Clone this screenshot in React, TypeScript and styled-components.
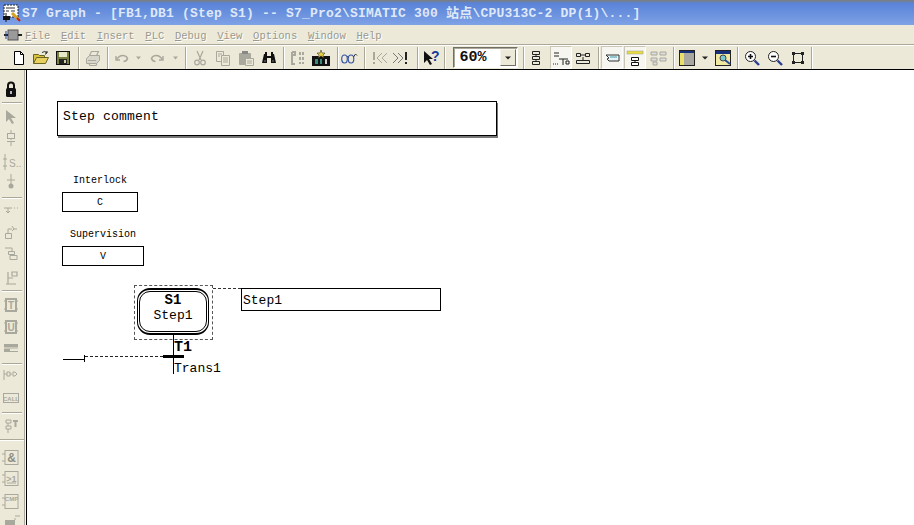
import React from "react";
import styled, { createGlobalStyle } from "styled-components";

const GlobalStyle = createGlobalStyle`
  html, body { margin: 0; padding: 0; background: #fff; }
  #root { width: 914px; height: 525px; overflow: hidden; }
`;

const GRAY = "#a9a89c";
const MONO = `"Liberation Mono", "Noto Sans CJK SC", monospace`;

const Window = styled.div`
  width: 914px;
  height: 525px;
  display: flex;
  flex-direction: column;
  overflow: hidden;
  background: #ece9d8;
  font-family: ${MONO};
`;
const TitleBar = styled.div`
  height: 25px;
  flex: none;
  display: flex;
  align-items: center;
  padding-left: 3px;
  box-sizing: border-box;
  background: linear-gradient(#77808a 0, #77808a 1px, #5a83d8 3px, #6b92de 14px, #7ea2e6 25px);
`;
const TitleText = styled.span`
  font-size: 13px;
  font-weight: 700;
  letter-spacing: 0.2px;
  color: #dfe8f8;
  white-space: pre;
  margin-top: -3px;
`;
const MenuBar = styled.div`
  height: 20px;
  flex: none;
  display: flex;
  align-items: center;
  padding-left: 4px;
  background: #ece9d8;
  box-sizing: border-box;
  border-bottom: 1px solid #aca899;
`;
const MenuList = styled.div`
  display: flex;
  gap: 10.7px;
  margin: 2px 0 0 3px;
`;
const MenuItem = styled.span`
  font-size: 10.5px;
  color: #9a998e;
  text-shadow: 1px 1px 0 #fff;
  u { text-underline-offset: 1px; }
`;
const ToolBar = styled.div`
  height: 25px;
  flex: none;
  display: flex;
  align-items: center;
  border-top: 1px solid #fff;
  border-bottom: 1px solid #000;
  box-sizing: border-box;
`;
const Slot = styled.div<{ $gap: number; $size: number }>`
  flex: none;
  width: ${(p) => p.$size}px;
  height: 16px;
  margin-left: ${(p) => p.$gap}px;
  display: flex;
  align-items: center;
  justify-content: center;
`;
const Face = styled.div<{ $active?: boolean }>`
  flex: none;
  display: flex;
  align-items: center;
  justify-content: center;
  width: 22px;
  height: 23px;
  box-sizing: border-box;
  ${(p) =>
    p.$active &&
    `background: #f6f5ef; border: 1px solid; border-color: #c9c6b6 #fff #fff #c9c6b6;`}
`;
const VSep = styled.div<{ $gap: number }>`
  flex: none;
  width: 1px;
  height: 22px;
  margin-left: ${(p) => p.$gap}px;
  margin-right: 1px;
  background: #aca899;
  box-shadow: 1px 0 0 #fff;
`;
const Combo = styled.div<{ $gap: number }>`
  flex: none;
  width: 65px;
  height: 21px;
  margin-left: ${(p) => p.$gap}px;
  display: flex;
  align-items: center;
  justify-content: space-between;
  box-sizing: border-box;
  background: #fff;
  border: 1px solid;
  border-color: #716f64 #fff #fff #716f64;
  box-shadow: inset 1px 1px 0 #aca899;
  font-size: 15px;
  font-weight: 700;
  color: #111;
  padding: 0 1px 0 6px;
`;
const ComboButton = styled.div`
  width: 16px;
  height: 17px;
  display: flex;
  align-items: center;
  justify-content: center;
  background: #ece9d8;
  border: 1px solid;
  border-color: #f6f5ef #716f64 #716f64 #f6f5ef;
  box-sizing: border-box;
`;
const Body = styled.div`
  flex: 1;
  display: flex;
  min-height: 0;
`;
const Rail = styled.div`
  width: 27px;
  flex: none;
  display: flex;
  flex-direction: column;
  align-items: flex-start;
  box-sizing: border-box;
  border-right: 1px solid #000;
  background: linear-gradient(to left, #f6f5ef 0, #f6f5ef 1px, #aca899 1px, #aca899 2px, #ece9d8 2px);
`;
const RailSlot = styled.div<{ $gap: number }>`
  flex: none;
  width: 22px;
  height: 16px;
  margin-top: ${(p) => p.$gap}px;
  display: flex;
  justify-content: center;
  align-items: center;
`;
const HSep = styled.div<{ $gap: number; $full?: boolean }>`
  flex: none;
  width: ${(p) => (p.$full ? 24 : 20)}px;
  height: 1px;
  margin: ${(p) => p.$gap}px 0 1px ${(p) => (p.$full ? 0 : 2)}px;
  background: #aca899;
  box-shadow: 0 1px 0 #fff;
`;
const Canvas = styled.div`
  flex: 1;
  position: relative;
  background: #fff;
  color: #000;
`;

// diagram nodes sit on a free canvas, coordinates are relative to it (27,70)
const CommentBox = styled.div`
  position: absolute;
  left: 30px;
  top: 31px;
  width: 440px;
  height: 35px;
  box-sizing: border-box;
  border: 1px solid #000;
  box-shadow: 1px 2px 0 #777;
  padding: 7px 0 0 5px;
  font-size: 13px;
  letter-spacing: 0.2px;
`;
const Caption = styled.div<{ $x: number; $y: number; $w: number }>`
  position: absolute;
  left: ${(p) => p.$x}px;
  top: ${(p) => p.$y}px;
  width: ${(p) => p.$w}px;
  text-align: center;
  font-size: 10px;
  line-height: 12px;
`;
const ActionBox = styled.div<{ $x: number; $y: number; $w: number }>`
  position: absolute;
  left: ${(p) => p.$x}px;
  top: ${(p) => p.$y}px;
  width: ${(p) => p.$w}px;
  height: 20px;
  box-sizing: border-box;
  border: 1px solid #000;
  display: flex;
  align-items: center;
  justify-content: center;
  font-size: 10px;
`;
const StepFrame = styled.div`
  position: absolute;
  left: 107px;
  top: 215px;
  width: 79px;
  height: 55px;
  box-sizing: border-box;
  border: 1px dashed #555;
`;
const StepBody = styled.div`
  position: absolute;
  left: 110px;
  top: 218px;
  width: 72px;
  height: 47px;
  box-sizing: border-box;
  border: 1px solid #000;
  border-top-width: 2px;
  border-bottom-width: 2px;
  border-radius: 13px;
  display: flex;
  align-items: center;
  justify-content: center;
  padding-bottom: 7px;
  &::after {
    content: "";
    position: absolute;
    inset: 1px;
    border: 1px solid #000;
    border-radius: 11px;
  }
`;
const StepText = styled.div`
  display: flex;
  flex-direction: column;
  align-items: center;
  font-size: 13px;
  line-height: 15px;
  strong { font-size: 14px; }
`;
const StepName = styled.div`
  position: absolute;
  left: 214px;
  top: 218px;
  width: 200px;
  height: 23px;
  box-sizing: border-box;
  border: 1px solid #000;
  padding-left: 1px;
  line-height: 23px;
  font-size: 13px;
`;
const Wires = styled.svg`
  position: absolute;
  left: 0;
  top: 0;
  pointer-events: none;
`;
const TransTitle = styled.strong`
  position: absolute;
  left: 147px;
  top: 270px;
  font-size: 15px;
  line-height: 16px;
`;
const TransName = styled.span`
  position: absolute;
  left: 147px;
  top: 291px;
  font-size: 13px;
  line-height: 15px;
`;

const Ico = ({ children, w = 16, h = 16 }: { children: React.ReactNode; w?: number; h?: number }) => (
  <svg width={w} height={h} viewBox={`0 0 ${w} ${h}`} style={{ display: "block", flex: "none", overflow: "visible" }}>
    {children}
  </svg>
);

const gl = { fontFamily: '"Liberation Sans", sans-serif', fontWeight: 700 } as const;

const icons: Record<string, React.ReactNode> = {
  app: (
    <Ico w={19} h={18}>
      <rect x="1" y="1" width="14" height="12" fill="#fff" stroke="#222" strokeDasharray="2 1" />
      <path d="M3 4h9M3 7h3M8 7h4" stroke="#333" />
      <path d="M0 12h7v4H0z" fill="#111" />
      <path d="M3 9v9" stroke="#111" />
      <path d="M9 9l7 7" stroke="#d8a020" strokeWidth="3" />
      <path d="M14 14l3 3" stroke="#c02020" strokeWidth="2" />
    </Ico>
  ),
  doc: (
    <Ico w={18} h={12}>
      <rect x="4" y="1" width="10" height="10" fill="#9a9a9a" stroke="#555" />
      <path d="M0 6h4M14 6h4" stroke="#222" strokeWidth="2" />
      <path d="M2 2v8" stroke="#2040a0" />
    </Ico>
  ),
  newFile: <Ico><path d="M3.5 1.5h6l3 3v10h-9z" fill="#fff" stroke="#000" /><path d="M9.5 1.5v3h3" fill="none" stroke="#000" /></Ico>,
  open: (
    <Ico>
      <path d="M0.5 13.5v-9h5l1 1h5v2h-7l-3 6z" fill="#d8c040" stroke="#6a6420" />
      <path d="M0.5 13.5l3-6h12l-3 6z" fill="#e8d060" stroke="#6a6420" />
      <path d="M9 2.5q3-2 5 0l-1.5 2M14 1v2h-2" fill="none" stroke="#333" />
    </Ico>
  ),
  save: (
    <Ico>
      <rect x="1.5" y="1.5" width="13" height="13" fill="#7a8040" stroke="#111" />
      <rect x="4" y="2" width="8" height="5" fill="#e8e8c8" />
      <rect x="4" y="9" width="8" height="5" fill="#222" />
      <rect x="9" y="10" width="2" height="3" fill="#cfcfa8" />
    </Ico>
  ),
  print: (
    <Ico>
      <path d="M1.5 8.5l3-3h10v5l-3 3h-10z" fill="#d8d6ca" stroke={GRAY} />
      <path d="M4.5 5.5l2-4h7l-2 4M4 13.5l1 2h6l1-2M3 10.5h8" fill="none" stroke={GRAY} strokeWidth="1.2" />
    </Ico>
  ),
  undo: <Ico><path d="M3 6v4h4" fill="none" stroke={GRAY} strokeWidth="1.4" /><path d="M3.5 9.5q3-4 6-4q4 0 5 3q-1 3-4 3" fill="none" stroke={GRAY} strokeWidth="1.6" /></Ico>,
  redo: <Ico><path d="M13 6v4h-4" fill="none" stroke={GRAY} strokeWidth="1.4" /><path d="M12.5 9.5q-3-4-6-4q-4 0-5 3q1 3 4 3" fill="none" stroke={GRAY} strokeWidth="1.6" /></Ico>,
  drop: <Ico w={6} h={4}><path d="M0 0.5h5l-2.5 3z" fill={GRAY} /></Ico>,
  dropDark: <Ico w={6} h={4}><path d="M0 0.5h6l-3 3z" fill="#222" /></Ico>,
  cut: (
    <Ico>
      <path d="M5 1l4 9M11 1l-4 9" stroke={GRAY} strokeWidth="1.2" />
      <circle cx="5" cy="12.5" r="2.3" fill="none" stroke={GRAY} strokeWidth="1.2" />
      <circle cx="11" cy="12.5" r="2.3" fill="none" stroke={GRAY} strokeWidth="1.2" />
    </Ico>
  ),
  copy: (
    <Ico>
      <path d="M1.5 1.5h7v10h-7z" fill="#ece9d8" stroke={GRAY} />
      <path d="M6.5 5.5h8v10h-8z" fill="#ece9d8" stroke={GRAY} />
      <path d="M3 4h4M3 6h2M8 8h5M8 10h5M8 12h5" stroke={GRAY} />
    </Ico>
  ),
  paste: (
    <Ico>
      <rect x="1" y="3" width="12" height="12" rx="1" fill={GRAY} />
      <rect x="4" y="1" width="6" height="3" fill="#888" />
      <path d="M7.5 8.5h8v7h-8z" fill="#ece9d8" stroke={GRAY} />
      <path d="M9 11h5M9 13h5" stroke={GRAY} />
    </Ico>
  ),
  binoc: (
    <Ico>
      <path d="M1 13l2-9h3v2h4V4h3l2 9h-5V8H6v5z" fill="#111" />
      <path d="M4 2h2v3H4zM10 2h2v3h-2z" fill="#111" />
      <path d="M3 11h2M11 11h2" stroke="#777" />
    </Ico>
  ),
  compile: (
    <Ico>
      <path d="M2 2h3v3H2M2 2v12h3" fill="none" stroke={GRAY} strokeWidth="2" />
      <path d="M9 2h2v3H9zM12 2h2v3h-2zM9 7h2v3H9zM12 7h2v3h-2zM9 12h2v2H9zM12 12h2v2h-2z" fill={GRAY} />
    </Ico>
  ),
  download: (
    <Ico w={18} h={16}>
      <path d="M0 6h18v10H0z" fill="#111" />
      <path d="M3 9h3v5H3zM8 9h2v5H8z" fill="#3a8a7a" />
      <path d="M13 9h2v5h-2z" fill="#ccc" />
      <path d="M9 0l1 3h3l-2 2 1 3-3-2-3 2 1-3-2-2h3z" fill="#e8d040" stroke="#222" strokeWidth="0.5" />
    </Ico>
  ),
  glasses: (
    <Ico>
      <ellipse cx="3.5" cy="9" rx="2.8" ry="4" fill="none" stroke="#3050a8" strokeWidth="1.1" />
      <ellipse cx="10" cy="9" rx="2.8" ry="4" fill="none" stroke="#3050a8" strokeWidth="1.1" />
      <path d="M6 7q.8-1 1.5 0M12.5 7l2-3 1.5 1.5" fill="none" stroke="#333" />
    </Ico>
  ),
  prev: (
    <Ico>
      <path d="M2 2v8M2 12v2" stroke={GRAY} strokeWidth="2" />
      <path d="M10 3l-5 5 5 5M15 3l-5 5 5 5" fill="none" stroke={GRAY} />
    </Ico>
  ),
  next: (
    <Ico>
      <path d="M1 3l5 5-5 5M6 3l5 5-5 5" fill="none" stroke="#777" />
      <path d="M14 2v8M14 12v2" stroke="#222" strokeWidth="2" />
    </Ico>
  ),
  help: (
    <Ico w={17} h={16}>
      <path d="M1 1v12l3-3 3 5 2-1-3-5h4z" fill="#111" />
      <text x="8" y="11" fontSize="14" fill="#1a3a9a" style={gl}>?</text>
    </Ico>
  ),
  tree: (
    <Ico>
      <path d="M4.5 1.5h7v3h-7zM4.5 6.5h7v3h-7zM4.5 11.5h7v3h-7zM8 4.5v2M8 9.5v2" fill="none" stroke="#222" />
    </Ico>
  ),
  trans: (
    <Ico w={18}>
      <path d="M2 3h5M2 6h5M7 9h9M11 9v6M14 11h3v3h-3z" fill="none" stroke="#222" />
      <path d="M1 14h6" stroke="#222" strokeDasharray="1 1" />
    </Ico>
  ),
  seq: (
    <Ico w={14} h={12}>
      <path d="M0.5 1.5h4v3h-4zM9.5 1.5h4v3h-4zM0.5 8.5h13v3h-13zM4 3h6M7 5v3" fill="none" stroke="#222" />
    </Ico>
  ),
  comment: (
    <Ico>
      <path d="M2 5l3 3-2 1 2 2h10V5z" fill="#e8f4f8" stroke="#333" />
      <path d="M6 7h7" stroke="#3a9aa8" />
    </Ico>
  ),
  stepView: (
    <Ico>
      <rect x="0" y="1" width="16" height="3" fill="#e8dc40" stroke="#999" strokeWidth="0.5" />
      <path d="M4.5 7.5h7v3h-7zM4.5 12.5h7v3h-7zM8 10v3" fill="#fff" stroke="#111" />
    </Ico>
  ),
  stepMulti: (
    <Ico w={17}>
      <path d="M1 2h6v3H1zM10 2h6v3h-6zM1 8h6v3H1zM10 8h6v3h-6zM3 12h4v3H3z" fill="#ddd" stroke={GRAY} />
    </Ico>
  ),
  panel: (
    <Ico>
      <rect x="0.5" y="0.5" width="15" height="15" fill="#a8a8a0" stroke="#222" />
      <rect x="1" y="1" width="14" height="2" fill="#16307e" />
      <rect x="1" y="3" width="4" height="12" fill="#e8e068" />
    </Ico>
  ),
  preview: (
    <Ico>
      <rect x="0.5" y="0.5" width="15" height="15" fill="#f0e8a0" stroke="#222" />
      <rect x="1" y="1" width="14" height="3" fill="#16307e" />
      <circle cx="8" cy="8" r="3" fill="#7ac8d0" stroke="#444" />
      <path d="M10 10l5 4" stroke="#2a4aa0" strokeWidth="2" />
    </Ico>
  ),
  zoomIn: (
    <Ico>
      <circle cx="6.5" cy="6.5" r="5" fill="#fff" stroke="#222" />
      <path d="M4 6.5h5M6.5 4v5" stroke="#111" strokeWidth="1.6" />
      <path d="M10.5 10.5l4.5 4.5" stroke="#2a3f90" strokeWidth="2.4" />
    </Ico>
  ),
  zoomOut: (
    <Ico>
      <circle cx="6.5" cy="6.5" r="5" fill="#fff" stroke="#222" />
      <path d="M4 6.5h5" stroke="#111" strokeWidth="1.6" />
      <path d="M10.5 10.5l4.5 4.5" stroke="#2a3f90" strokeWidth="2.4" />
    </Ico>
  ),
  zoomFit: (
    <Ico>
      <path d="M3.5 3.5h9v9h-9z" fill="none" stroke="#222" />
      <path d="M2 2h3v3H2zM11 2h3v3h-3zM2 11h3v3H2zM11 11h3v3h-3z" fill="#222" />
    </Ico>
  ),
  lock: (
    <Ico w={12} h={17}>
      <path d="M3 8V4.5a3 3 0 0 1 6 0V8" fill="none" stroke="#111" strokeWidth="2" />
      <rect x="1" y="7" width="10" height="9" rx="1.5" fill="#111" />
      <rect x="5" y="10" width="2" height="3" fill="#bbb" />
    </Ico>
  ),
  pointer: <Ico><path d="M3 1v12l3-3 3 5 2-1-3-5h5z" fill={GRAY} /></Ico>,
  step: <Ico><path d="M8 0v3M8 8v2M4 11.5h8M8 12v4" stroke={GRAY} /><rect x="4.5" y="3.5" width="7" height="5" fill="none" stroke={GRAY} /></Ico>,
  ts: (
    <Ico w={18}>
      <path d="M3 0v16M1 5h4M1 12h4" stroke={GRAY} />
      <text x="7" y="13" fontSize="10" fill={GRAY} style={{ fontFamily: '"Liberation Sans", sans-serif' }}>S..</text>
    </Ico>
  ),
  jump: <Ico><path d="M8 0v12M4 6h8" stroke={GRAY} /><circle cx="8" cy="12" r="2.5" fill={GRAY} /></Ico>,
  branch1: <Ico><path d="M1 5h8M5 5v5M3 8l2 2 2-2M11 5h1M14 5h1" fill="none" stroke={GRAY} /></Ico>,
  branch2: <Ico><path d="M2.5 8.5h6v5h-6zM5 8V4h4M11 4h3M9 1l2 3-2 2" fill="none" stroke={GRAY} /></Ico>,
  branch3: <Ico><path d="M2 1h7v3M5.5 4.5h6v3h-6zM7 8.5h7v4H7z" fill="none" stroke={GRAY} /></Ico>,
  branch4: <Ico><path d="M3 15h10M5 3v12M5 9h5M9 3h5v4H9z" fill="none" stroke={GRAY} strokeWidth="1.2" /></Ico>,
  blockT: (
    <Ico>
      <rect x="3" y="2" width="10" height="12" fill="none" stroke={GRAY} strokeWidth="2" />
      <path d="M1 4h2M1 12h2M13 4h2M13 12h2" stroke={GRAY} />
      <text x="8" y="12" fontSize="10" textAnchor="middle" fill={GRAY} style={gl}>T</text>
    </Ico>
  ),
  blockU: (
    <Ico>
      <rect x="3" y="2" width="10" height="12" fill="none" stroke={GRAY} strokeWidth="2" />
      <path d="M1 4h2M1 12h2M13 4h2M13 12h2" stroke={GRAY} />
      <text x="8" y="12" fontSize="10" textAnchor="middle" fill={GRAY} style={gl}>U</text>
    </Ico>
  ),
  bar: <Ico><rect x="1" y="4" width="14" height="8" fill={GRAY} /><path d="M1 8h14" stroke="#ece9d8" /><path d="M7 10h8" stroke="#ece9d8" strokeWidth="2" /></Ico>,
  contact: <Ico w={18}><path d="M2 2v10M2 6h3M5 4h3v4H5zM8 6h2M11 4h2l2 2-2 2h-2z" fill="none" stroke={GRAY} /></Ico>,
  call: (
    <Ico w={16} h={10}>
      <rect x="0.5" y="0.5" width="15" height="9" fill="none" stroke={GRAY} />
      <text x="8" y="7.5" fontSize="6" textAnchor="middle" fill={GRAY} style={gl}>CALL</text>
    </Ico>
  ),
  seqBlock: <Ico><path d="M3 2h5v3H3zM3 8h5v3H3zM5 5v3M5 11v4" fill="none" stroke={GRAY} /><path d="M10 3h5M12.5 3v6" stroke={GRAY} strokeWidth="2" /></Ico>,
  and: (
    <Ico w={18} h={16}>
      <rect x="3" y="0.5" width="13" height="14" fill="none" stroke={GRAY} />
      <path d="M0 4h3M0 11h3" stroke={GRAY} />
      <text x="9.5" y="12" fontSize="12" textAnchor="middle" fill="#8f8e84" style={gl}>&amp;</text>
    </Ico>
  ),
  or: (
    <Ico w={18} h={16}>
      <rect x="3" y="0.5" width="13" height="14" fill="none" stroke={GRAY} />
      <path d="M0 4h3M0 11h3" stroke={GRAY} />
      <text x="9.5" y="11" fontSize="9" textAnchor="middle" fill={GRAY} style={gl}>&gt;1</text>
      <path d="M5 12h9" stroke={GRAY} />
    </Ico>
  ),
  cmp: (
    <Ico w={18} h={16}>
      <rect x="3" y="0.5" width="13" height="14" fill="none" stroke={GRAY} />
      <path d="M0 4h3M0 11h3" stroke={GRAY} />
      <text x="9.5" y="7" fontSize="6" textAnchor="middle" fill={GRAY} style={gl}>CMP</text>
    </Ico>
  ),
  last: <Ico w={18} h={10}><rect x="3" y="5" width="10" height="5" fill={GRAY} /><path d="M13 3v2M13 1h5" stroke={GRAY} /></Ico>,
};

type Tool = { at: number; size?: number; icon?: string; sep?: boolean; combo?: boolean; active?: boolean };

const tools: Tool[] = [
  { at: 19, icon: "newFile" }, { at: 41, icon: "open" }, { at: 63, icon: "save" }, { at: 78, sep: true },
  { at: 93, icon: "print" }, { at: 107, sep: true }, { at: 121, icon: "undo" }, { at: 139, size: 6, icon: "drop" },
  { at: 158, icon: "redo" }, { at: 176, size: 6, icon: "drop" }, { at: 185, sep: true }, { at: 200, icon: "cut" },
  { at: 223, icon: "copy" }, { at: 246, icon: "paste" }, { at: 269, icon: "binoc" }, { at: 283, sep: true },
  { at: 298, icon: "compile" }, { at: 321, size: 18, icon: "download" }, { at: 337, sep: true }, { at: 349, icon: "glasses" },
  { at: 364, sep: true }, { at: 380, icon: "prev" }, { at: 400, icon: "next" }, { at: 417, sep: true },
  { at: 431, size: 17, icon: "help" }, { at: 444, sep: true }, { at: 485, size: 65, combo: true }, { at: 523, sep: true },
  { at: 536, icon: "tree" }, { at: 561, size: 18, icon: "trans", active: true }, { at: 583, size: 14, icon: "seq" }, { at: 598, sep: true },
  { at: 612, icon: "comment", active: true }, { at: 635, icon: "stepView", active: true }, { at: 658, size: 17, icon: "stepMulti" }, { at: 673, sep: true },
  { at: 687, icon: "panel" }, { at: 705, size: 6, icon: "dropDark" }, { at: 723, icon: "preview" }, { at: 737, sep: true },
  { at: 752, icon: "zoomIn" }, { at: 775, icon: "zoomOut" }, { at: 798, icon: "zoomFit" }, { at: 811, sep: true },
];

type RailTool = { at: number; icon?: string; sep?: boolean; full?: boolean };

const railTools: RailTool[] = [
  { at: 89, icon: "lock" }, { at: 102, sep: true }, { at: 117, icon: "pointer" }, { at: 138, icon: "step" },
  { at: 162, icon: "ts" }, { at: 182, icon: "jump" }, { at: 197, sep: true }, { at: 211, icon: "branch1" },
  { at: 233, icon: "branch2" }, { at: 255, icon: "branch3" }, { at: 277, icon: "branch4" }, { at: 290, sep: true },
  { at: 305, icon: "blockT" }, { at: 327, icon: "blockU" }, { at: 348, icon: "bar" }, { at: 363, sep: true },
  { at: 376, icon: "contact" }, { at: 398, icon: "call" }, { at: 412, sep: true }, { at: 426, icon: "seqBlock" },
  { at: 439, sep: true, full: true }, { at: 458, icon: "and" }, { at: 479, icon: "or" }, { at: 502, icon: "cmp" }, { at: 520, icon: "last" },
];

const menus = ["File", "Edit", "Insert", "PLC", "Debug", "View", "Options", "Window", "Help"];

const renderTools = () => {
  let edge = 0;
  return tools.map((t, i) => {
    if (t.sep) {
      const gap = t.at - edge;
      edge = t.at + 2;
      return <VSep key={i} $gap={gap} />;
    }
    const size = t.size ?? 16;
    const gap = t.at - size / 2 - edge;
    edge = t.at + size / 2;
    if (t.combo) {
      return (
        <Combo key={i} $gap={gap}>
          60%
          <ComboButton>{icons.dropDark}</ComboButton>
        </Combo>
      );
    }
    return (
      <Slot key={i} $gap={gap} $size={size}>
        <Face $active={t.active}>{icons[t.icon!]}</Face>
      </Slot>
    );
  });
};

const renderRail = () => {
  let edge = 70;
  return railTools.map((t, i) => {
    if (t.sep) {
      const gap = t.at - edge;
      edge = t.at + 2;
      return <HSep key={i} $gap={gap} $full={t.full} />;
    }
    const gap = t.at - 8 - edge;
    edge = t.at + 8;
    return <RailSlot key={i} $gap={gap}>{icons[t.icon!]}</RailSlot>;
  });
};

export default function App() {
  return (
    <Window>
      <GlobalStyle />
      <TitleBar>
        {icons.app}
        <TitleText>{"S7 Graph - [FB1,DB1 (Step S1) -- S7_Pro2\\SIMATIC 300 站点\\CPU313C-2 DP(1)\\...]"}</TitleText>
      </TitleBar>
      <MenuBar>
        {icons.doc}
        <MenuList>
          {menus.map((m) => (
            <MenuItem key={m}>
              <u>{m[0]}</u>
              {m.slice(1)}
            </MenuItem>
          ))}
        </MenuList>
      </MenuBar>
      <ToolBar>{renderTools()}</ToolBar>
      <Body>
        <Rail>{renderRail()}</Rail>
        <Canvas>
          <CommentBox>Step comment</CommentBox>
          <Caption $x={35} $y={105} $w={76}>Interlock</Caption>
          <ActionBox $x={35} $y={122} $w={76}>C</ActionBox>
          <Caption $x={35} $y={159} $w={82}>Supervision</Caption>
          <ActionBox $x={35} $y={176} $w={82}>V</ActionBox>
          <StepFrame />
          <StepBody>
            <StepText>
              <strong>S1</strong>
              <span>Step1</span>
            </StepText>
          </StepBody>
          <StepName>Step1</StepName>
          <Wires width={300} height={320}>
            <path d="M186 218.5h28" stroke="#333" strokeDasharray="3 2" />
            <path d="M146.5 265v39" stroke="#000" />
            <path d="M136 286.5h21" stroke="#000" strokeWidth="3" />
            <path d="M58 286.5h78" stroke="#222" strokeDasharray="3 2" />
            <path d="M36 289.5h22M57.5 285v7" stroke="#000" />
          </Wires>
          <TransTitle>T1</TransTitle>
          <TransName>Trans1</TransName>
        </Canvas>
      </Body>
    </Window>
  );
}
